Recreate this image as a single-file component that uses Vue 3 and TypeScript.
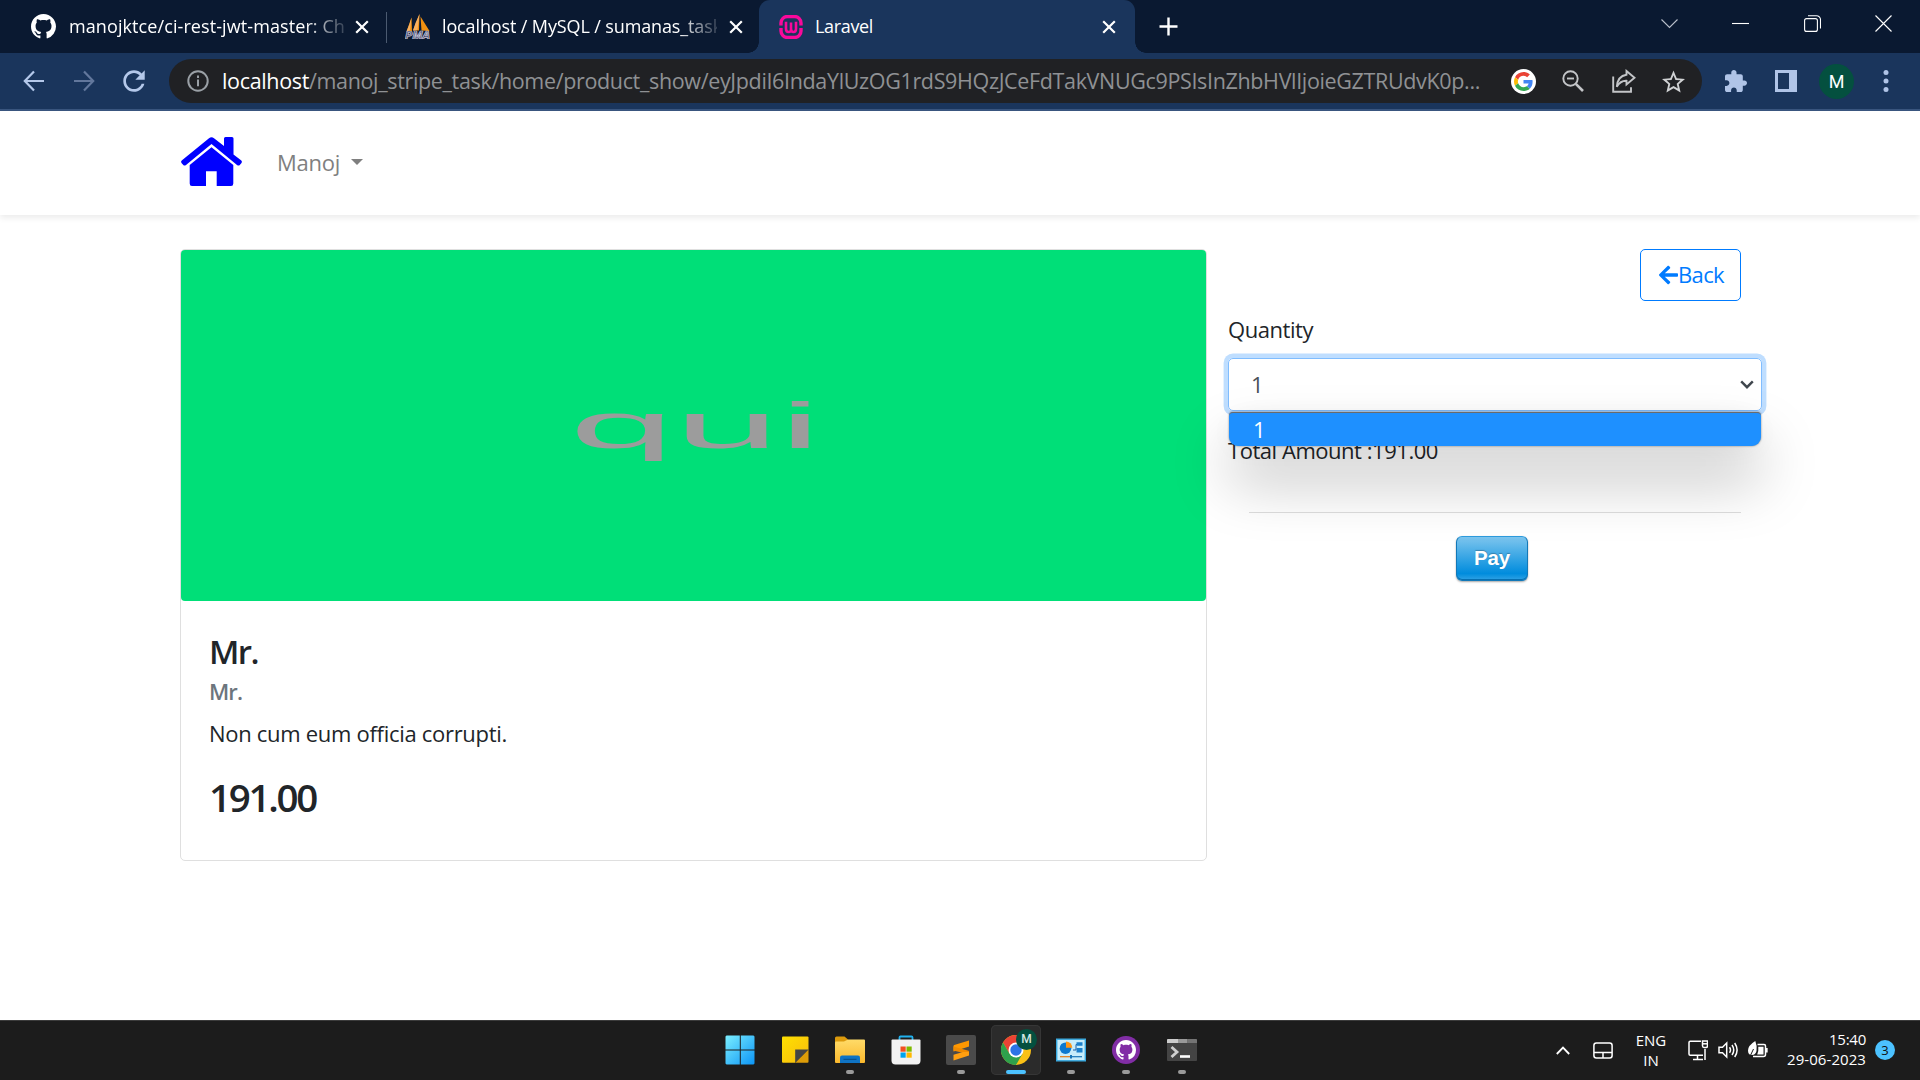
<script setup lang="ts">
import type { Directive } from 'vue'

// Tracks a run of text so that it spans the given number of pixels.
const vFit: Directive<HTMLElement, number> = {
  mounted(el, binding) {
    const count = (el.textContent ?? '').length
    const natural = el.getBoundingClientRect().width
    if (count > 0) el.style.letterSpacing = `${(binding.value - natural) / count}px`
  },
}

const url = {
  host: 'localhost',
  path: '/manoj_stripe_task/home/product_show/eyJpdiI6IndaYlUzOG1rdS9HQzJCeFdTakVNUGc9PSIsInZhbHVlIjoieGZTRUdvK0p...',
}
const product = {
  image: 'qui',
  title: 'Mr.',
  subtitle: 'Mr.',
  description: 'Non cum eum officia corrupti.',
  price: '191.00',
}
const githubMark =
  'M8 0C3.58 0 0 3.58 0 8c0 3.54 2.29 6.53 5.47 7.59.4.07.55-.17.55-.38 0-.19-.01-.82-.01-1.49-2.01.37-2.53-.49-2.69-.94-.09-.23-.48-.94-.82-1.13-.28-.15-.68-.52-.01-.53.63-.01 1.08.58 1.23.82.72 1.21 1.87.87 2.33.66.07-.52.28-.87.51-1.07-1.78-.2-3.64-.89-3.64-3.95 0-.87.31-1.59.82-2.15-.08-.2-.36-1.02.08-2.12 0 0 .67-.21 2.2.82.64-.18 1.32-.27 2-.27s1.36.09 2 .27c1.53-1.04 2.2-.82 2.2-.82.44 1.1.16 1.92.08 2.12.51.56.82 1.27.82 2.15 0 3.07-1.87 3.75-3.65 3.95.29.25.54.73.54 1.48 0 1.07-.01 1.93-.01 2.2 0 .21.15.46.55.38A8.01 8.01 0 0 0 16 8c0-4.42-3.58-8-8-8z'
</script>

<template>
  <div class="screen">
    <div class="tabstrip">
      <div class="tab tab-one">
        <svg class="favicon" viewBox="0 0 16 16"><path :d="githubMark" fill="#fff" /></svg>
        <div class="tab-title faded"><span v-fit="276">manojktce/ci-rest-jwt-master: Ch</span></div>
        <svg class="tab-close" viewBox="0 0 14 14"><path d="M1.2 1.2 12.8 12.8M12.8 1.2 1.2 12.8" /></svg>
      </div>
      <div class="tab-sep"></div>
      <div class="tab tab-two">
        <svg class="favicon" viewBox="0 0 25 25">
          <path d="M6.500 3.500 1.500 17.500H7zM14.500 0 8 16.500H14zM15.500 2.500 24.500 17 16.500 16.500z" fill="#f29111" />
          <path d="M6.500 3.500 4.500 10 1.500 17.500 5 16zM14.500 0 10.500 9 8 16.500 12.500 16z" fill="#f8b060" />
          <text x="0" y="25" font-size="10.500" font-weight="700" font-style="italic" textLength="25" lengthAdjust="spacingAndGlyphs" fill="#3f4166" stroke="#c6c6d8" stroke-width=".7">PMA</text>
        </svg>
        <div class="tab-title faded"><span v-fit="280">localhost / MySQL / sumanas_task</span></div>
        <svg class="tab-close" viewBox="0 0 14 14"><path d="M1.200 1.200 12.800 12.800M12.800 1.200 1.200 12.800" /></svg>
      </div>
      <div class="tab tab-active">
        <svg class="favicon wamp" viewBox="0 0 24 24" fill="none" stroke="#f9099b">
          <path d="M2 10.500V8a6.500 6.500 0 0 1 6.500-6.500h7A6.500 6.500 0 0 1 22 8v2.500M2 13v3a6.500 6.500 0 0 0 6.500 6.500h7A6.500 6.500 0 0 0 22 16v-3" stroke-width="3.400" />
          <path d="M7 6.800v7q0 3.200 2.600 3.200T12 13.800V7.500M12 13.800q0 3.200 2.500 3.200t2.500-3.200v-7" stroke-width="2.600" />
        </svg>
        <div class="tab-title"><span v-fit="58">Laravel</span></div>
        <svg class="tab-close" viewBox="0 0 14 14"><path d="M1.200 1.200 12.800 12.800M12.800 1.200 1.200 12.800" /></svg>
      </div>
      <svg class="new-tab" viewBox="0 0 19 19"><path d="M9.500 .5v18M.5 9.500h18" /></svg>
      <div class="window-controls">
        <svg viewBox="0 0 17 17"><path d="M.5 4.500 8.500 12.500 16.500 4.500" stroke="#b9bfca" /></svg>
        <svg viewBox="0 0 17 17"><path d="M0 8.500h17" /></svg>
        <svg viewBox="0 0 17 17"><rect x=".6" y="3.600" width="12.800" height="12.800" rx="2" /><path d="M4 .7h8.500a4 4 0 0 1 4 4v8.800" /></svg>
        <svg viewBox="0 0 17 17"><path d="M.5.5l16 16M16.500.5l-16 16" /></svg>
      </div>
    </div>

    <div class="toolbar">
      <div class="nav-icons">
        <svg viewBox="0 0 22 22"><path d="M21 11H2M11 1.500 1.800 11 11 20.500" /></svg>
        <svg class="dim" viewBox="0 0 22 22"><path d="M1 11h19M11 1.500 20.200 11 11 20.500" /></svg>
        <svg class="reload" viewBox="3.800 3.800 16.400 16.400"><path d="M17.650 6.350C16.200 4.900 14.210 4 12 4c-4.420 0-7.990 3.580-7.990 8s3.570 8 7.990 8c3.730 0 6.840-2.550 7.730-6h-2.080c-.82 2.330-3.040 4-5.650 4-3.310 0-6-2.690-6-6s2.690-6 6-6c1.660 0 3.140.69 4.220 1.780L13 11h7V4l-2.350 2.350z" /></svg>
      </div>
      <div class="omnibox">
        <svg class="info" viewBox="0 0 22 22"><circle cx="11" cy="11" r="9.700" /><path d="M11 9.500v6.700M11 5.600v2.400" /></svg>
        <div class="url"><span v-fit="87" class="host">{{ url.host }}</span><span v-fit="1171">{{ url.path }}</span></div>
        <div class="omni-actions">
          <span class="google">
            <svg viewBox="0 0 48 48">
              <path fill="#EA4335" d="M24 9.500c3.540 0 6.710 1.220 9.210 3.600l6.850-6.850C35.900 2.380 30.470 0 24 0 14.620 0 6.510 5.380 2.560 13.220l7.980 6.190C12.430 13.720 17.740 9.500 24 9.500z" />
              <path fill="#4285F4" d="M46.980 24.550c0-1.570-.15-3.090-.38-4.550H24v9.020h12.940c-.58 2.960-2.260 5.480-4.780 7.180l7.730 6c4.510-4.180 7.090-10.360 7.090-17.650z" />
              <path fill="#FBBC05" d="M10.530 28.590c-.48-1.450-.76-2.990-.76-4.590s.27-3.140.76-4.590l-7.980-6.190C.92 16.460 0 20.120 0 24c0 3.880.92 7.540 2.560 10.780l7.970-6.190z" />
              <path fill="#34A853" d="M24 48c6.480 0 11.930-2.130 15.890-5.810l-7.730-6c-2.150 1.450-4.920 2.300-8.160 2.300-6.260 0-11.570-4.220-13.470-9.910l-7.980 6.190C6.510 42.620 14.620 48 24 48z" />
            </svg>
          </span>
          <svg class="zoomer" viewBox="0 0 22 22"><circle cx="8.500" cy="8.500" r="7.200" /><path d="M13.800 13.800 21 21" stroke-width="2.600" /><path d="M5 8.500h7" /></svg>
          <svg class="share" viewBox="0 0 24 24"><path d="M1.200 7.500v15.300H19v-4.500" /><path d="M14.500 2 22.500 8.800 14.500 15.500V11.800Q8.500 11.500 4.800 17.800 5.500 7 14.500 5.700z" /></svg>
          <svg class="star" viewBox="2 2 20 19"><path d="M22 9.240l-7.190-.62L12 2 9.190 8.630 2 9.240l5.460 4.730L5.820 21 12 17.270 18.180 21l-1.630-7.030L22 9.240zM12 15.400l-3.760 2.270 1-4.280-3.320-2.880 4.380-.38L12 6.100l1.710 4.040 4.380.38-3.320 2.880 1 4.280L12 15.400z" /></svg>
        </div>
      </div>
      <div class="browser-actions">
        <svg class="puzzle" viewBox="2 1 21 21"><path d="M20.500 11H19V7c0-1.100-.9-2-2-2h-4V3.500C13 2.120 11.880 1 10.500 1S8 2.120 8 3.500V5H4c-1.100 0-1.990.9-1.990 2v3.800H3.500c1.490 0 2.700 1.210 2.700 2.700s-1.210 2.700-2.700 2.700H2V20c0 1.100.9 2 2 2h3.800v-1.500c0-1.490 1.210-2.700 2.700-2.700 1.490 0 2.700 1.210 2.700 2.700V22H17c1.100 0 2-.9 2-2v-4h1.500c1.380 0 2.500-1.120 2.500-2.500S21.880 11 20.500 11z" /></svg>
        <svg class="panel" viewBox="0 0 22 22"><path fill-rule="evenodd" d="M0 0h22v22H0zM3 3v16h11V3z" /></svg>
        <span class="avatar">M</span>
        <svg class="more" viewBox="0 0 6 22"><circle cx="3" cy="2.600" r="2.500" /><circle cx="3" cy="11" r="2.500" /><circle cx="3" cy="19.400" r="2.500" /></svg>
      </div>
    </div>

    <main class="page">
      <nav class="navbar">
        <svg class="home" viewBox="0 0 61 49">
          <path d="M28 1.200Q30.500-.8 33 1.200L43 9V1.500Q43 0 44.500 0H51q1.500 0 1.500 1.500v16L60 23.200q1.500 1.300.5 2.800l-1.700 2q-1.300 1-2.800 0L30.500 7 5 28q-1.500 1-2.700 0L.5 26Q-.5 24.500 1 23.200z" />
          <path d="M30.500 10.300 52.300 28v18.500q0 2.500-2.300 2.500H35.700V34.300H25V49H11q-2.300 0-2.300-2.500V28z" />
        </svg>
        <span class="user"><span v-fit="63">Manoj</span></span>
        <span class="caret"></span>
      </nav>

      <div class="content">
        <section class="card">
          <div class="card-image"><span>{{ product.image }}</span></div>
          <div class="card-body">
            <h4><span v-fit="49">{{ product.title }}</span></h4>
            <h6><span v-fit="33">{{ product.subtitle }}</span></h6>
            <p><span v-fit="298">{{ product.description }}</span></p>
            <h3><span v-fit="107">{{ product.price }}</span></h3>
          </div>
        </section>

        <section class="order">
          <button class="back">
            <svg viewBox="0 0 448 512"><path d="M257.500 445.100l-22.200 22.200c-9.400 9.400-24.600 9.400-33.900 0L7 273c-9.400-9.400-9.400-24.600 0-33.900L201.400 44.700c9.400-9.400 24.600-9.400 33.900 0l22.200 22.200c9.500 9.500 9.300 25-.4 34.300L136.600 216H424c13.300 0 24 10.700 24 24v32c0 13.300-10.700 24-24 24H136.600l120.500 114.800c9.800 9.300 10 24.800.4 34.300z" /></svg>
            <span v-fit="46">Back</span>
          </button>
          <label class="label"><span v-fit="85">Quantity</span></label>
          <div class="select">
            <span>1</span>
            <svg viewBox="0 0 14 9"><path d="M1.200 1.400 7 7.200 12.800 1.400" /></svg>
            <div class="options"><span>1</span></div>
          </div>
          <p class="total"><span v-fit="210">Total Amount :191.00</span></p>
          <hr />
          <button class="pay"><span v-fit="36">Pay</span></button>
        </section>
      </div>
    </main>

    <footer class="taskbar">
      <div class="apps">
        <div class="app">
          <svg viewBox="0 0 30 30">
            <defs><linearGradient id="win" gradientUnits="userSpaceOnUse" x1="0" y1="0" x2="30" y2="30"><stop offset="0" stop-color="#7df0ff" /><stop offset="1" stop-color="#0a93f5" /></linearGradient></defs>
            <path fill="url(#win)" d="M1.500.5H14.800V14.400H.5V1.500zM15.800.5H28.500L29.500 1.500V14.400H15.800zM.5 15.400H14.800V29.500H1.500L.5 28.500zM15.800 15.400H29.500V28.500L28.500 29.500H15.800z" />
          </svg>
        </div>
        <div class="app">
          <svg viewBox="0 0 30 30">
            <defs><linearGradient id="note" x1="0" y1="0" x2="1" y2="1"><stop offset="0" stop-color="#ffe000" /><stop offset="1" stop-color="#f7bb0e" /></linearGradient></defs>
            <path fill="url(#note)" d="M3 1.500H27.500Q28.500 1.500 28.500 2.500V14.500L15 27.700H3Q2 27.700 2 26.700V2.500Q2 1.500 3 1.500z" />
            <path d="M28.500 14.500V26.700Q28.500 27.700 27.500 27.700H15.200z" fill="#dd9c08" /><path d="M15.200 14.500H28.500L15.200 27.700z" fill="#444" />
          </svg>
        </div>
        <div class="app running">
          <svg viewBox="0 0 30 30">
            <defs><linearGradient id="folder" x1="0" y1="0" x2="0" y2="1"><stop offset="0" stop-color="#ffdb68" /><stop offset="1" stop-color="#fbb82c" /></linearGradient></defs>
            <path d="M0 3Q0 1.500 1.500 1.500H9.500L13 4.500 11 7H0z" fill="#dc9a0c" />
            <path fill="url(#folder)" d="M0 7.500Q0 6.500 1 6.500H9L13 4.500H29Q30 4.500 30 5.500V27Q30 28 29 28H1Q0 28 0 27z" />
            <path d="M5 28V22.500Q5 20.500 7 20.500H23Q25 20.500 25 22.500V28z" fill="#0f73c4" /><path d="M8.500 23.800h13v1h-13z" fill="#084b83" />
          </svg>
        </div>
        <div class="app">
          <svg viewBox="0 0 30 30">
            <path d="M8.500 6V2.500Q8.500 1.500 9.500 1.500H20.500Q21.500 1.500 21.500 2.500V6" fill="none" stroke="#21b1ee" stroke-width="1.800" />
            <path d="M.5 5.500Q.5 4.500 1.500 4.500H28.500Q29.500 4.500 29.500 5.500V25.500Q29.500 29.500 25.500 29.500H4.500Q.5 29.500.5 25.500z" fill="#f2f2f2" />
            <path d="M9.500 11.500h5.200v5.200H9.500z" fill="#f25022" /><path d="M15.500 11.500h5.200v5.200h-5.200z" fill="#7fba00" /><path d="M9.500 17.500h5.200v5.200H9.500z" fill="#00a4ef" /><path d="M15.500 17.500h5.200v5.200h-5.200z" fill="#ffb900" />
          </svg>
        </div>
        <div class="app running">
          <svg viewBox="0 0 30 30">
            <rect width="30" height="30" rx="2" fill="#4a4a4a" />
            <path d="M23 5.500V11.500L7.500 16.500V11Q7.500 10.300 8.200 10z" fill="#ff9800" /><path d="M7.500 11.500 22.500 15.800Q23 16 23 16.800V19.500L7.500 15.500z" fill="#f08a00" /><path d="M23 17V20.500L7.500 25.500V19.800L17 17z" fill="#ff9f10" />
          </svg>
        </div>
        <div class="app running current">
          <svg viewBox="0 0 30 30">
            <circle cx="15" cy="15" r="15" fill="#fbc116" />
            <path d="M15 15V0A15 15 0 0 0 2 7.500L8.500 18.800z" fill="#ea4335" /><path d="M15 0A15 15 0 0 1 28 7.500H15z" fill="#ea4335" />
            <path d="M2 7.500A15 15 0 0 0 15 30L21.500 18.800 15 15 8.500 18.800z" fill="#2fa14c" />
            <circle cx="15" cy="15" r="7.500" fill="#fff" /><circle cx="15" cy="15" r="5.700" fill="#2c74e5" />
          </svg>
          <span class="profile">M</span>
        </div>
        <div class="app running">
          <svg viewBox="0 0 30 30">
            <rect x=".7" y="4.200" width="28.600" height="21.600" fill="#c7edfb" stroke="#38a9e0" stroke-width="1.400" />
            <circle cx="9.500" cy="13.200" r="5.800" fill="#0c79cf" /><path d="M10 12.700V6.500A6.300 6.300 0 0 1 16.300 12.700z" fill="#ff9615" />
            <path d="M17 15h3V9.500M20 9.500h2" stroke="#225da0" fill="none" /><path d="M20.500 7.300h6v3.400h-6zM20.500 13h6v4.500h-6z" fill="#1b80cc" />
            <path d="M4 21.700h11" stroke="#e87c13" stroke-width="1.200" /><path d="M15 21.700h11" stroke="#1976b8" stroke-width="1.200" /><path d="M14 20h2v3.400h-2z" fill="#1976b8" />
          </svg>
        </div>
        <div class="app running">
          <svg viewBox="0 0 30 30">
            <circle cx="15" cy="15" r="14" fill="#812da5" />
            <svg x="5" y="5" width="20" height="20" viewBox="0 0 16 16"><path :d="githubMark" fill="#fff" /></svg>
          </svg>
        </div>
        <div class="app running">
          <svg viewBox="0 0 30 30">
            <rect y="4" width="30" height="22" rx="1" fill="#444" /><path d="M0 8V5Q0 4 1 4H11V8z" fill="#ccc" /><path d="M11 4h9.500v4H11z" fill="#999" /><path d="M20.500 4H29Q30 4 30 5V8h-9.500z" fill="#747474" />
            <path d="M4.500 12 10 17 4.500 22" fill="none" stroke="#cfcfcf" stroke-width="2.800" /><path d="M13 20.200h10v2.600H13z" fill="#fff" />
          </svg>
        </div>
      </div>
      <div class="tray">
        <svg class="chev" viewBox="0 0 14 9"><path d="M.8 8 7 1.600 13.200 8" stroke-width="1.800" /></svg>
        <svg class="pad" viewBox="0 0 20 17"><rect x=".9" y=".9" width="18.200" height="15.200" rx="2.500" /><path d="M1 10.500h18M10 10.500V16" /></svg>
        <div class="lang"><span>ENG</span><span>IN</span></div>
        <svg class="net" viewBox="0 0 20 21"><path d="M13 1.200H2.200Q1 1.200 1 2.400V14Q1 15.200 2.200 15.200H15M9.500 15.500V19M5 19.400h10M17 9V20" /><path d="M14.500 1h5v4.800q0 1.700-1.500 1.700h-2q-1.500 0-1.500-1.700z" /><path d="M14.500 3.800h5" /></svg>
        <svg class="sound" viewBox="0 0 21 18"><path d="M1 6.200H4.500L8.700 2V16L4.500 11.800H1z" /><path d="M11.500 6.200q2 2.800 0 5.600M14 4q3.500 5 0 10M16.700 2q4.800 7 0 14" /></svg>
        <svg class="batt" viewBox="0 0 20 18"><path d="M9.500 3.600H16Q17.500 3.600 17.500 5V13.500Q17.500 15.500 15.500 15.500H5M18.900 7v4.500" /><path d="M0 9.500Q0 4.500 7.300 0 9.500 5.500 8.500 10 7.500 14 4 14 0 14 0 9.500zM9.200 13.500Q10.800 10 10.300 5.800H15.500V13.500z" fill="#fff" stroke="none" /><path d="M1.500 16.500 5.500 8" stroke="#1c1c1c" stroke-width="1" /></svg>
        <div class="clock"><span v-fit="37">15:40</span><span v-fit="79">29-06-2023</span></div>
        <span class="count">3</span>
      </div>
    </footer>
  </div>
</template>

<style>
body {
  margin: 0;
  background: #fff;
  overflow: hidden;
}
</style>

<style scoped>
.screen {
  display: flex;
  flex-direction: column;
  width: 1920px;
  height: 1080px;
  font-family: "Open Sans", "Noto Sans", sans-serif;
  color: #212529;
  overflow: hidden;
}
.screen * {
  box-sizing: border-box;
}
svg {
  display: block;
  flex: none;
}
span {
  display: inline-block;
}

/* tab strip */
.tabstrip {
  display: flex;
  height: 53px;
  flex: none;
  background: #0a1931;
}
.tab {
  display: flex;
  align-items: center;
  height: 53px;
  color: #fff;
  font-size: 18px;
  line-height: 53px;
  white-space: nowrap;
}
.tab-one {
  width: 386px;
  padding-left: 31px;
}
.tab-two {
  width: 372px;
  padding-left: 18px;
}
.tab-two .favicon {
  margin-right: 12px;
}
.tab-two .faded {
  margin-right: 12px;
}
.tab-sep {
  width: 1px;
  height: 31px;
  margin-top: 12px;
  background: #4b5a70;
}
.tab-active {
  position: relative;
  width: 376px;
  padding: 0 19px 0 20px;
  border-radius: 11px 11px 0 0;
  background: #1a355c;
}
.tab-active::before,
.tab-active::after {
  content: "";
  position: absolute;
  bottom: 0;
  width: 11px;
  height: 11px;
}
.tab-active::before {
  left: -11px;
  background: radial-gradient(circle at 0 0, transparent 10.5px, #1a355c 11px);
}
.tab-active::after {
  right: -11px;
  background: radial-gradient(circle at 100% 0, transparent 10.5px, #1a355c 11px);
}
.favicon {
  width: 25px;
  height: 25px;
  margin-right: 13px;
}
.wamp {
  width: 24px;
  height: 24px;
  margin-right: 12px;
}
.tab-title {
  overflow: hidden;
  height: 53px;
  flex: 1;
}
.faded {
  flex: none;
  width: 275px;
  margin-right: 11px;
  mask-image: linear-gradient(90deg, #000 236px, transparent 284px);
}
.tab-close {
  width: 14px;
  height: 14px;
  fill: none;
  stroke: #fff;
  stroke-width: 2.2;
}
.new-tab {
  width: 19px;
  height: 19px;
  margin: 17px 0 0 24px;
  stroke: #fff;
  stroke-width: 2.4;
}
.window-controls {
  display: flex;
  gap: 54.5px;
  margin: 15px 28px 0 auto;
}
.window-controls svg {
  width: 17px;
  height: 17px;
  fill: none;
  stroke: #fff;
  stroke-width: 1.1;
}

/* toolbar */
.toolbar {
  display: flex;
  align-items: center;
  height: 58px;
  flex: none;
  border-bottom: 2px solid #3a567f;
  background: #1a355c;
}
.nav-icons {
  display: flex;
  align-items: center;
  gap: 28px;
  width: 169px;
  padding-left: 23px;
}
.nav-icons svg {
  width: 22px;
  height: 22px;
  fill: none;
  stroke: #b4c8ea;
  stroke-width: 2.2;
}
.nav-icons .dim {
  stroke: #62779c;
}
.nav-icons .reload {
  fill: #b4c8ea;
  stroke: none;
}
.omnibox {
  display: flex;
  align-items: center;
  width: 1533px;
  height: 44px;
  padding: 0 17px 0 18px;
  border-radius: 22px;
  background: #202124;
}
.info {
  width: 22px;
  height: 22px;
  fill: none;
  stroke: #9aa0a6;
  stroke-width: 2;
}
.url {
  margin-left: 13px;
  font-size: 21.5px;
  line-height: 42px;
  white-space: nowrap;
  color: #8f9194;
}
.host {
  color: #fff;
}
.omni-actions {
  display: flex;
  align-items: center;
  margin-left: auto;
}
.google {
  display: flex;
  align-items: center;
  justify-content: center;
  width: 25px;
  height: 25px;
  border-radius: 50%;
  background: #fff;
}
.google svg {
  width: 19px;
  height: 19px;
}
.zoomer,
.share {
  fill: none;
  stroke: #c3c5c8;
  stroke-width: 1.9;
}
.zoomer {
  width: 22px;
  height: 22px;
  margin-left: 26px;
}
.share {
  width: 24px;
  height: 24px;
  margin-left: 28px;
}
.star {
  width: 23px;
  height: 23px;
  margin-left: 26px;
  fill: #d0d2d4;
}
.browser-actions {
  display: flex;
  align-items: center;
  margin-left: 23px;
  fill: #b0c4e7;
}
.puzzle,
.panel {
  width: 22px;
  height: 22px;
}
.panel {
  margin-left: 28px;
}
.avatar {
  width: 35px;
  height: 35px;
  margin-left: 22px;
  border-radius: 50%;
  background: #04503f;
  color: #fff;
  font: 18px/35px Roboto, sans-serif;
  text-align: center;
}
.more {
  width: 6px;
  height: 22px;
  margin-left: 29px;
}

/* page */
.page {
  flex: 1;
  background: #fff;
  font-size: 22px;
}
.navbar {
  display: flex;
  align-items: center;
  height: 104px;
  padding: 0 0 2px 181px;
  box-shadow: 0 3px 6px rgba(0, 0, 0, 0.08);
}
.home {
  width: 61px;
  height: 49px;
  margin-bottom: 2px;
  fill: #00f;
}
.user {
  margin-left: 35px;
  color: #808080;
}
.caret {
  margin: 0 0 1px 11px;
  border: 6px solid transparent;
  border-top-color: #7f7f7f;
  border-bottom: 0;
}
.content {
  display: flex;
  align-items: flex-start;
  padding: 34px 0 0 180px;
}
.card {
  width: 1027px;
  height: 612px;
  border: 1px solid #dfdfdf;
  border-radius: 5px;
}
.card-image {
  display: flex;
  align-items: center;
  justify-content: center;
  height: 351px;
  padding-left: 4px;
  border-radius: 4px;
  background: #00df78;
  color: #9c9c9c;
  font: 65px/75px "Liberation Sans", sans-serif;
}
.card-image span {
  transform: scaleX(2.9);
}
.card-body {
  padding: 31px 28px;
}
h3,
h4,
h6,
p {
  margin: 0;
}
h4 {
  font-size: 33px;
  line-height: 40px;
  font-weight: 600;
}
h6 {
  margin-top: 6px;
  font-size: 22px;
  line-height: 26px;
  font-weight: 600;
  color: #6c757d;
}
p,
.label {
  line-height: 35px;
}
.card-body p {
  margin-top: 12px;
}
h3 {
  margin-top: 23px;
  font-size: 38.5px;
  line-height: 47px;
  font-weight: 600;
}
.order {
  display: flex;
  flex-direction: column;
  width: 534px;
  margin-left: 21px;
}
.back {
  display: flex;
  align-items: center;
  align-self: flex-end;
  width: 101px;
  height: 52px;
  margin-right: 21px;
  padding: 0 0 0 18px;
  border: 1px solid #007bff;
  border-radius: 5px;
  background: #fff;
  color: #007bff;
  font: inherit;
  line-height: 48px;
}
.back span {
  height: 50px;
}
.back svg {
  width: 19px;
  height: 22px;
  fill: #007bff;
}
.label {
  margin-top: 11px;
}
.select {
  position: relative;
  display: flex;
  align-items: center;
  justify-content: space-between;
  height: 53px;
  margin-top: 11px;
  padding: 0 7px 0 22px;
  border: 1px solid #80bdff;
  border-radius: 5px;
  box-shadow: 0 0 0 4.4px #bfdeff;
  color: #495057;
}
.select > span {
  margin-bottom: 2px;
}
.select svg {
  width: 14px;
  height: 9px;
  fill: none;
  stroke: #3f464d;
  stroke-width: 2.4;
}
.options {
  position: absolute;
  left: 0;
  top: 53px;
  width: 532px;
  height: 34px;
  padding-left: 24px;
  border-top: 1px solid #6b6b6b;
  border-radius: 4px 4px 9px 9px;
  background: #1e90ff;
  box-shadow: 0 0 2px rgba(0, 0, 0, 0.5), 0 34px 58px rgba(0, 0, 0, 0.27), 0 4px 28px -8px rgba(0, 0, 0, 0.1);
  color: #fff;
  line-height: 33px;
}
.total {
  margin-top: 22px;
}
hr {
  width: 492px;
  height: 1px;
  margin: 44px 21px 0;
  border: 0;
  background: #dedede;
}
.pay {
  align-self: flex-start;
  width: 72px;
  height: 45px;
  margin: 23px 0 0 228px;
  padding: 0 0 2px;
  border: 1px solid #1278b8;
  border-top-color: #2d9bdd;
  border-radius: 6px;
  background: linear-gradient(#7dc5ee, #008cdd 85%, #30a2e4);
  box-shadow: 0 1px 2px rgba(0, 0, 0, 0.35), inset 0 -1px 0 #0770b1;
  color: #fff;
  font: 700 20.5px/40px "Liberation Sans", sans-serif;
  text-shadow: 0 -1px 1px rgba(0, 0, 0, 0.25);
}

/* taskbar */
.taskbar {
  position: relative;
  display: flex;
  height: 60px;
  flex: none;
  border-top: 1px solid #3b3b3b;
  background: #1c1c1c;
  color: #fff;
}
.apps {
  display: flex;
  gap: 5.2px;
  margin: 4px 0 0 715px;
}
.app {
  position: relative;
  display: flex;
  align-items: center;
  justify-content: center;
  width: 50px;
  height: 50px;
  border-radius: 5px;
}
.app > svg {
  width: 30px;
  height: 30px;
}
.running::after {
  content: "";
  position: absolute;
  bottom: 1px;
  left: 21px;
  width: 8px;
  height: 4px;
  border-radius: 2px;
  background: #9a9a9a;
}
.current {
  background: #2b2b2b;
  box-shadow: inset 0 0 0 1px #363636;
}
.current::after {
  left: 15px;
  width: 20px;
  background: #4cc2ff;
}
.profile {
  position: absolute;
  top: 4px;
  left: 25px;
  width: 21px;
  height: 21px;
  border-radius: 50%;
  background: #04503f;
  color: #d5e8e3;
  font: 500 12px/21px Roboto, sans-serif;
  text-align: center;
}
.tray {
  display: flex;
  align-items: center;
  margin-left: auto;
  padding: 0 25px 1px 0;
  font-size: 15px;
  line-height: 20px;
}
.tray svg {
  fill: none;
  stroke: #fff;
  stroke-width: 1.5;
}
.chev {
  width: 14px;
  height: 9px;
}
.pad {
  width: 20px;
  height: 17px;
  margin-left: 23px;
}
.lang {
  display: flex;
  flex-direction: column;
  align-items: center;
  width: 30px;
  margin-left: 23px;
  margin-bottom: 1px;
}
.net {
  width: 20px;
  height: 21px;
  margin-left: 22px;
}
.sound {
  width: 21px;
  height: 18px;
  margin-left: 10px;
}
.batt {
  width: 20px;
  height: 18px;
  margin-left: 9px;
}
.clock {
  display: flex;
  flex-direction: column;
  align-items: flex-end;
  width: 80px;
  margin-left: 18px;
  margin-bottom: 2px;
}
.count {
  width: 20px;
  height: 20px;
  margin-left: 9px;
  border-radius: 50%;
  background: #4cc2ff;
  color: #111;
  font-size: 13px;
  text-align: center;
}
</style>
